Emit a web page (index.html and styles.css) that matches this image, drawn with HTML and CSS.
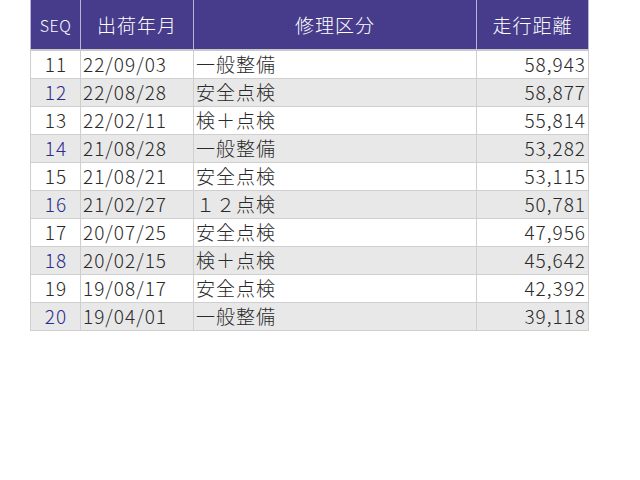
FILE: index.html
```html
<!DOCTYPE html>
<html lang="ja">
<head>
<meta charset="utf-8">
<title>修理履歴</title>
<link rel="stylesheet" href="styles.css">
</head>
<body>
<table class="history">
  <thead>
    <tr>
      <th class="c-seq seq-head">SEQ</th>
      <th class="c-date">出荷年月</th>
      <th class="c-kind">修理区分</th>
      <th class="c-dist">走行距離</th>
    </tr>
  </thead>
  <tbody>
    <tr class="odd"><td class="c-seq">11</td><td class="c-date">22/09/03</td><td class="c-kind">一般整備</td><td class="c-dist">58,943</td></tr>
    <tr class="even"><td class="c-seq">12</td><td class="c-date">22/08/28</td><td class="c-kind">安全点検</td><td class="c-dist">58,877</td></tr>
    <tr class="odd"><td class="c-seq">13</td><td class="c-date">22/02/11</td><td class="c-kind">検＋点検</td><td class="c-dist">55,814</td></tr>
    <tr class="even"><td class="c-seq">14</td><td class="c-date">21/08/28</td><td class="c-kind">一般整備</td><td class="c-dist">53,282</td></tr>
    <tr class="odd"><td class="c-seq">15</td><td class="c-date">21/08/21</td><td class="c-kind">安全点検</td><td class="c-dist">53,115</td></tr>
    <tr class="even"><td class="c-seq">16</td><td class="c-date">21/02/27</td><td class="c-kind">１２点検</td><td class="c-dist">50,781</td></tr>
    <tr class="odd"><td class="c-seq">17</td><td class="c-date">20/07/25</td><td class="c-kind">安全点検</td><td class="c-dist">47,956</td></tr>
    <tr class="even"><td class="c-seq">18</td><td class="c-date">20/02/15</td><td class="c-kind">検＋点検</td><td class="c-dist">45,642</td></tr>
    <tr class="odd"><td class="c-seq">19</td><td class="c-date">19/08/17</td><td class="c-kind">安全点検</td><td class="c-dist">42,392</td></tr>
    <tr class="even"><td class="c-seq">20</td><td class="c-date">19/04/01</td><td class="c-kind">一般整備</td><td class="c-dist">39,118</td></tr>
  </tbody>
</table>
</body>
</html>
```

FILE: styles.css
```css
html, body {
  margin: 0;
  padding: 0;
  background: #ffffff;
}

body {
  padding: 0 0 0 30px;
  font-family: "Noto Sans CJK JP", "DejaVu Sans", sans-serif;
  color: #2a2a2a;
}

.history {
  border-collapse: collapse;
  width: 558px;
  table-layout: fixed;
}

.history th,
.history td {
  box-sizing: border-box;
  letter-spacing: 1px;
}

.history th {
  background: #473b8b;
  color: #ffffff;
  font-weight: 300;
  font-size: 19px;
  height: 50px;
  padding: 0;
  text-align: center;
  border-left: 1px solid #b9b3d8;
  border-right: 1px solid #b9b3d8;
  border-bottom: 2px solid #c9c9c9;
  line-height: 20px;
}

.history th.seq-head {
  font-size: 16px;
  letter-spacing: 0.5px;
}

.history td {
  height: 28px;
  padding: 0 3px;
  font-size: 19px;
  font-weight: 300;
  line-height: 20px;
  border: 1px solid #cfcfcf;
  white-space: nowrap;
}

.history tr.even td {
  background: #e8e8e8;
}

.c-seq { width: 50px; text-align: center; }
.c-date { width: 113px; text-align: left; }
.c-kind { width: 283px; text-align: left; }
.c-dist { width: 112px; text-align: right; }

.history td.c-seq { color: #2a2a2a; padding-left: 4px; }
.history tr.even td.c-seq { color: #2c2c8c; }
.history td.c-date { padding-left: 2px; }
.history td.c-kind { padding-left: 2px; }
.history td.c-dist { padding-right: 2px; }
```
